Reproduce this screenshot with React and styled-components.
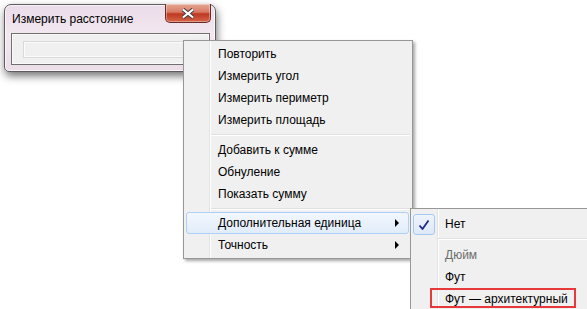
import styled, { createGlobalStyle } from 'styled-components';

const GlobalStyle = createGlobalStyle`
  body {
    margin: 0;
    background: #fff;
    font-family: "Liberation Sans", Arial, sans-serif;
  }
`;

const mainItems = [
  ['Повторить', 'Измерить угол', 'Измерить периметр', 'Измерить площадь'],
  ['Добавить к сумме', 'Обнуление', 'Показать сумму'],
];

const App = () => {
  return (
    <Desktop>
      <GlobalStyle />
      <Window>
        <TitleBar>
          <Title>Измерить расстояние</Title>
          <CloseButton>
            <svg width="14" height="11" viewBox="0 0 14 11">
              <path
                d="M2 1.5 L7 5.5 L12 1.5 M2 9.5 L7 5.5 L12 9.5"
                stroke="#3d3d3d"
                strokeWidth="4"
                fill="none"
              />
              <path
                d="M2 1.5 L7 5.5 L12 1.5 M2 9.5 L7 5.5 L12 9.5"
                stroke="#fff"
                strokeWidth="2.2"
                fill="none"
              />
            </svg>
          </CloseButton>
        </TitleBar>
        <Panel>
          <Field />
        </Panel>
      </Window>

      <Menu>
        {mainItems.map((group, gi) => (
          <Group key={gi}>
            {group.map((label) => (
              <Item key={label}>{label}</Item>
            ))}
            <Separator $h={gi === 0 ? 8 : 7} />
          </Group>
        ))}
        <Item $active>
          Дополнительная единица
          <Arrow />
        </Item>
        <Item>
          Точность
          <Arrow />
        </Item>
      </Menu>

      <SubMenu>
        <SubItem>
          <CheckBox>
            <svg width="12" height="12" viewBox="0 0 12 12">
              <path
                d="M1.5 6.5 L4.5 10 L10.5 1.5"
                stroke="#1b2a8c"
                strokeWidth="1.8"
                fill="none"
                strokeLinejoin="round"
              />
            </svg>
          </CheckBox>
          Нет
        </SubItem>
        <Separator $h={9} />
        <SubItem $disabled>Дюйм</SubItem>
        <SubItem>Фут</SubItem>
        <SubItem>Фут — архитектурный</SubItem>
      </SubMenu>

      <Marker />
    </Desktop>
  );
};

export default App;

const Desktop = styled.div`
  position: relative;
  width: 587px;
  height: 309px;
  overflow: hidden;
  background: #fff;
`;

const Window = styled.div`
  position: absolute;
  left: 4px;
  top: 4px;
  width: 212px;
  height: 68px;
  box-sizing: border-box;
  border: 1px solid #5e5a5e;
  border-radius: 7px 7px 5px 5px;
  background: linear-gradient(to bottom, #eadbe8 0%, #f3e8f0 45%, #ecdde9 100%);
  box-shadow: 1px 4px 8px rgba(0, 0, 0, 0.55), inset 0 0 0 1px rgba(255, 255, 255, 0.7);
  display: flex;
  flex-direction: column;
`;

const TitleBar = styled.div`
  position: relative;
  height: 28px;
  display: flex;
  align-items: center;
  padding-left: 7px;
`;

const Title = styled.span`
  font-size: 12px;
  color: #000;
`;

const CloseButton = styled.div`
  position: absolute;
  right: 4px;
  top: -1px;
  width: 46px;
  height: 19px;
  box-sizing: border-box;
  border: 1px solid #6b2b24;
  border-top: none;
  border-radius: 0 0 5px 5px;
  background: linear-gradient(to bottom, #e6a896 0%, #d87a64 45%, #bf3820 55%, #d4654a 100%);
  box-shadow: inset 0 0 0 1px rgba(255, 255, 255, 0.35);
  display: flex;
  align-items: center;
  justify-content: center;
`;

const Panel = styled.div`
  margin: 0 5px 0 6px;
  height: 32px;
  box-sizing: border-box;
  border: 1px solid #6f6f6f;
  background: #f0f0f0;
  box-shadow: inset 0 0 0 1px #fafafa;
  padding: 7px 0 0 11px;
`;

const Field = styled.div`
  height: 17px;
  box-sizing: border-box;
  border: 1px solid #d9d9d9;
  background: #f0f0f0;
  box-shadow: inset 0 0 0 1px #fbfbfb;
`;

const Menu = styled.div`
  position: absolute;
  left: 183px;
  top: 40px;
  width: 230px;
  box-sizing: border-box;
  border: 1px solid #979797;
  padding: 2px 2px 2px 2px;
  background-color: #f0f0f0;
  background-image: linear-gradient(
    to right,
    transparent 25px,
    #e2e3e3 25px,
    #e2e3e3 26px,
    #ffffff 26px,
    #ffffff 27px,
    transparent 27px
  );
  box-shadow: 2px 2px 3px rgba(0, 0, 0, 0.35);
  display: flex;
  flex-direction: column;
`;

const Group = styled.div`
  display: flex;
  flex-direction: column;
`;

const Item = styled.div`
  position: relative;
  height: 22px;
  box-sizing: border-box;
  display: flex;
  align-items: center;
  padding-left: 31px;
  font-size: 12px;
  color: ${(p) => (p.$disabled ? '#6d6d6d' : '#000')};
  border: 1px solid ${(p) => (p.$active ? '#aecff7' : 'transparent')};
  border-radius: 3px;
  margin-right: 1px;
  background: ${(p) =>
    p.$active ? 'linear-gradient(to bottom, #f2f7fd, #e1ecfa)' : 'transparent'};
`;

const Arrow = styled.span`
  position: absolute;
  right: 9px;
  top: 6px;
  width: 0;
  height: 0;
  border-top: 4px solid transparent;
  border-bottom: 4px solid transparent;
  border-left: 4px solid #000;
`;

const Separator = styled.div`
  height: ${(p) => p.$h}px;
  margin-left: 25px;
  background: linear-gradient(
    to bottom,
    transparent 3px,
    #e0e0e0 3px,
    #e0e0e0 4px,
    #ffffff 4px,
    #ffffff 5px,
    transparent 5px
  );
`;

const SubMenu = styled.div`
  position: absolute;
  left: 410px;
  top: 208px;
  width: 200px;
  height: 120px;
  box-sizing: border-box;
  border: 1px solid #979797;
  padding: 4px 2px 2px 1px;
  background-color: #f0f0f0;
  background-image: linear-gradient(
    to right,
    transparent 26px,
    #e2e3e3 26px,
    #e2e3e3 27px,
    #ffffff 27px,
    #ffffff 28px,
    transparent 28px
  );
  display: flex;
  flex-direction: column;

  & > ${Separator} {
    margin-left: 26px;
  }
`;

const SubItem = styled(Item)`
  padding-left: 32px;
`;

const CheckBox = styled.span`
  position: absolute;
  left: 0;
  top: 0;
  width: 22px;
  height: 21px;
  box-sizing: border-box;
  border: 1px solid #a8c8ee;
  border-radius: 3px;
  background: linear-gradient(to bottom, #eef4fc, #dce8f8);
  display: flex;
  align-items: center;
  justify-content: center;
`;

const Marker = styled.div`
  position: absolute;
  left: 430px;
  top: 288px;
  width: 146px;
  height: 20px;
  box-sizing: border-box;
  border: 2px solid #e8393a;
`;
